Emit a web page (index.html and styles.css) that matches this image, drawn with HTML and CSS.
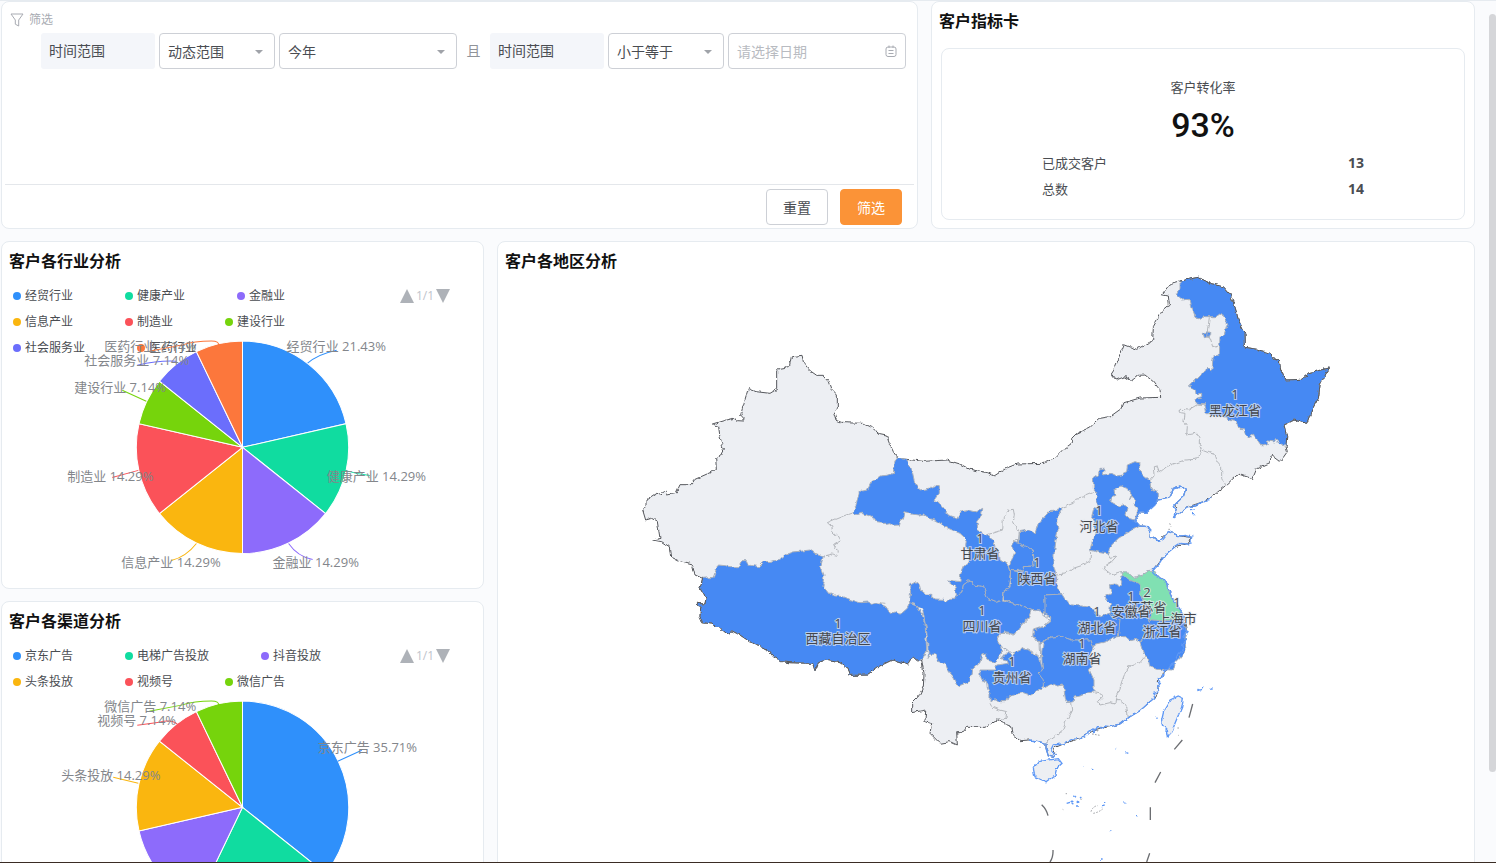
FILE: index.html
```html
<!DOCTYPE html>
<html lang="zh-CN">
<head>
    <meta charset="UTF-8">
    <meta name="viewport" content="width=device-width, initial-scale=1.0">
    <title>客户分析</title>
    <link rel="stylesheet" href="styles.css">
</head>
<body>
    <main class="dashboard">
        <div class="row row-top">
            <form class="panel filter">
                <div class="filter-head">
                    <svg class="icon" viewBox="0 0 14 14" width="14" height="14"><path d="M1 1h12L8.700 7v6l-3.400-1.800V7z"/></svg>
                    筛选
                </div>
                <div class="filter-row">
                    <label class="field" for="range">时间范围</label>
                    <span class="select short">
                        <select id="range"><option>动态范围</option></select>
                    </span>
                    <span class="select long">
                        <select aria-label="动态范围"><option>今年</option></select>
                    </span>
                    <span class="and">且</span>
                    <label class="field" for="compare">时间范围</label>
                    <span class="select short">
                        <select id="compare"><option>小于等于</option></select>
                    </span>
                    <span class="date long">
                        <input type="text" aria-label="日期" placeholder="请选择日期">
                        <svg class="icon" viewBox="0 0 12 12" width="12" height="12"><rect x="1" y="2" width="10" height="9.500" rx="2"/><path d="M4 .5v2.500M8 .5v2.500M3.500 5.500h5M3.500 8.500h5"/></svg>
                    </span>
                </div>
                <div class="filter-foot">
                    <button type="reset" class="btn">重置</button>
                    <button type="button" class="btn primary">筛选</button>
                </div>
            </form>

            <section class="panel metric">
                <h2 class="title">客户指标卡</h2>
                <div class="card">
                    <div class="card-name">客户转化率</div>
                    <div class="card-value">93%</div>
                    <div class="card-line"><span>已成交客户</span><b>13</b></div>
                    <div class="card-line"><span>总数</span><b>14</b></div>
                </div>
            </section>
        </div>

        <div class="row row-main">
            <div class="column">
                <section class="panel">
                    <h2 class="title">客户各行业分析</h2>
                    <div class="chart">
                        <div class="chart-head">
                            <ul class="legend">
                                <li class="c-blue">经贸行业</li>
                                <li class="c-green">健康产业</li>
                                <li class="c-purple">金融业</li>
                                <li class="c-yellow">信息产业</li>
                                <li class="c-red">制造业</li>
                                <li class="c-lime">建设行业</li>
                                <li class="c-indigo">社会服务业</li>
                                <li class="c-orange">医药行业</li>
                            </ul>
                            <div class="pager"><i class="up"></i>1/1<i class="down"></i></div>
                        </div>
                        <svg class="pie" viewBox="3 283 480 304">
                            <g class="slices" transform="translate(243 447)">
                                <path class="c-blue" d="M0 0V-106A106 106 0 0 1 103.300-23.600z"/>
                                <path class="c-green" d="M0 0L103.300-23.600A106 106 0 0 1 82.900 66.100z"/>
                                <path class="c-purple" d="M0 0L82.900 66.100A106 106 0 0 1 0 106z"/>
                                <path class="c-yellow" d="M0 0V106A106 106 0 0 1-82.900 66.100z"/>
                                <path class="c-red" d="M0 0L-82.900 66.100A106 106 0 0 1-103.300-23.600z"/>
                                <path class="c-lime" d="M0 0L-103.300-23.600A106 106 0 0 1-82.900-66.100z"/>
                                <path class="c-indigo" d="M0 0L-82.900-66.100A106 106 0 0 1-46-95.500z"/>
                                <path class="c-orange" d="M0 0L-46-95.500A106 106 0 0 1 0-106z"/>
                            </g>
                            <g class="leaders">
                                <path class="c-blue" d="M308 363Q318 354 337 350"/>
                                <path class="c-green" d="M345 470Q358 474 370 475"/>
                                <path class="c-purple" d="M289 543Q298 556 313 559"/>
                                <path class="c-yellow" d="M197 543Q187 556 172 560"/>
                                <path class="c-red" d="M139 470L113 477"/>
                                <path class="c-lime" d="M147 401L123 390"/>
                                <path class="c-indigo" d="M177 361Q160 360 138 365"/>
                                <path class="c-orange" d="M219 345Q220 341 212 341Q195 341 182 345L150 351"/>
                            </g>
                            <g class="labels">
                                <text x="287" y="351">经贸行业 21.43%</text>
                                <text x="327" y="481">健康产业 14.29%</text>
                                <text x="273" y="566">金融业 14.29%</text>
                                <text x="122" y="566">信息产业 14.29%</text>
                                <text x="68" y="481">制造业 14.29%</text>
                                <text x="75" y="392">建设行业 7.14%</text>
                                <text x="85" y="365">社会服务业 7.14%</text>
                                <text x="105" y="351">医药行业 7.14%</text>
                            </g>
                        </svg>
                    </div>
                </section>

                <section class="panel">
                    <h2 class="title">客户各渠道分析</h2>
                    <div class="chart">
                        <div class="chart-head">
                            <ul class="legend">
                                <li class="c-blue">京东广告</li>
                                <li class="c-green">电梯广告投放</li>
                                <li class="c-purple">抖音投放</li>
                                <li class="c-yellow">头条投放</li>
                                <li class="c-red">视频号</li>
                                <li class="c-lime">微信广告</li>
                            </ul>
                            <div class="pager"><i class="up"></i>1/1<i class="down"></i></div>
                        </div>
                        <svg class="pie" viewBox="3 643 480 304">
                            <g class="slices" transform="translate(243 807)">
                                <path class="c-blue" d="M0 0V-106A106 106 0 0 1 82.900 66.100z"/>
                                <path class="c-green" d="M0 0L82.900 66.100A106 106 0 0 1-46 95.500z"/>
                                <path class="c-purple" d="M0 0L-46 95.500A106 106 0 0 1-103.300 23.600z"/>
                                <path class="c-yellow" d="M0 0L-103.300 23.600A106 106 0 0 1-82.900-66.100z"/>
                                <path class="c-red" d="M0 0L-82.900-66.100A106 106 0 0 1-46-95.500z"/>
                                <path class="c-lime" d="M0 0L-46-95.500A106 106 0 0 1 0-106z"/>
                            </g>
                            <g class="leaders">
                                <path class="c-blue" d="M338 761L362 750"/>
                                <path class="c-yellow" d="M139 783L114 777"/>
                                <path class="c-red" d="M178 724Q172 719 160 722L138 725"/>
                                <path class="c-lime" d="M219 705Q220 701 212 701Q195 701 182 705L150 711"/>
                            </g>
                            <g class="labels">
                                <text x="318" y="752">京东广告 35.71%</text>
                                <text x="62" y="780">头条投放 14.29%</text>
                                <text x="98" y="725">视频号 7.14%</text>
                                <text x="105" y="711">微信广告 7.14%</text>
                            </g>
                        </svg>
                    </div>
                </section>
            </div>

            <section class="panel region">
                <h2 class="title">客户各地区分析</h2>
                <svg class="map" viewBox="-396 39 2928 1800">
                    <defs>
                        <filter id="crinkle" x="-5%" y="-5%" width="110%" height="110%" color-interpolation-filters="sRGB">
                            <feTurbulence type="fractalNoise" baseFrequency="0.06" numOctaves="2" seed="4"/>
                            <feDisplacementMap in="SourceGraphic" scale="13" xChannelSelector="R" yChannelSelector="G"/>
                        </filter>
                    </defs>
                    <g filter="url(#crinkle)">
                    <!-- country -->
                    <path class="land" d="M47 750L38 720 48 708 48 690 60 682 78 670 92 672 108 662 112 675 138 670 150 644 182 644 195 628 240 608 262 596 260 562 272 555 280 540 270 500 266 472 250 462 290 450 312 445 322 452 340 453 342 446 332 435 340 405 355 355 378 365 420 370 440 358 440 305 450 295 478 290 484 260 500 258 516 256 522 280 540 302 560 316 580 316 598 335 606 358 622 375 622 415 612 430 618 450 640 458 700 460 725 472 750 494 770 498 778 520 790 545 803 565 830 568 880 574 950 570 990 582 1020 598 1070 608 1092 618 1130 594 1160 582 1240 580 1270 568 1295 542 1325 520 1325 505 1340 490 1380 472 1410 445 1440 440 1475 415 1482 398 1530 384 1592 382 1590 360 1570 335 1545 315 1525 316 1505 332 1485 320 1458 330 1444 312 1452 300 1483 224 1520 238 1568 212 1570 170 1595 125 1618 105 1615 78 1595 74 1620 42 1650 33 1705 22 1740 40 1780 50 1798 70 1812 100 1825 150 1845 190 1846 232 1880 238 1920 250 1930 265 1948 272 1952 300 1965 330 2015 328 2040 308 2098 294 2080 325 2070 345 2065 385 2045 420 2030 460 1992 450 1962 465 1970 500 1968 530 1972 545 1960 562 1948 574 1924 556 1920 578 1880 596 1868 626 1825 612 1785 648 1740 685 1720 695 1670 712 1630 742 1640 718 1638 700 1660 680 1666 660 1650 648 1630 655 1615 685 1585 690 1575 705 1548 730 1530 728 1515 752 1530 768 1555 770 1562 780 1560 802 1585 812 1615 785 1650 798 1685 802 1670 822 1635 830 1605 855 1575 895 1565 905 1575 915 1600 925 1615 955 1630 990 1655 1025 1665 1060 1670 1085 1665 1110 1660 1130 1655 1150 1635 1180 1610 1200 1595 1215 1582 1230 1585 1265 1575 1282 1555 1300 1530 1322 1500 1340 1470 1362 1440 1370 1415 1375 1385 1385 1350 1405 1300 1422 1270 1435 1278 1450 1270 1462 1255 1458 1248 1435 1248 1420 1230 1416 1200 1410 1170 1412 1150 1395 1145 1370 1120 1360 1100 1350 1080 1362 1065 1372 1010 1372 1000 1385 980 1385 982 1425 960 1415 930 1420 900 1390 905 1360 885 1355 887 1320 845 1328 845 1300 865 1280 880 1250 882 1210 875 1170 862 1172 848 1160 835 1182 790 1168 745 1190 710 1215 660 1216 655 1195 630 1178 585 1170 565 1178 555 1202 548 1180 480 1178 455 1175 430 1160 418 1145 390 1130 375 1125 330 1095 305 1082 295 1095 280 1082 245 1062 218 1058 210 1040 212 1015 202 1000 225 1002 228 985 210 955 218 925 195 915 188 885 150 875 122 860 118 830 95 815 68 810 90 805 82 755 65 745z"/>

                    <!-- provinces with customers -->
                    <g class="active" transform="translate(0 210)">
                        <path d="M218 715L250 712 258 690 265 675 285 677 300 680 325 680 335 662 350 662 355 675 385 680 400 665 425 664 450 658 465 645 490 636 540 630 555 640 580 648 572 680 582 705 578 735 600 762 615 768 640 770 665 780 690 788 715 786 728 793 740 788 768 800 780 820 800 815 815 820 832 805 840 788 860 795 875 825 885 850 890 930 875 955 862 962 848 950 835 972 790 958 745 980 710 1005 660 1006 655 985 630 968 585 960 565 968 555 992 548 970 480 968 455 965 430 950 418 935 390 920 375 915 330 885 305 872 295 885 280 872 245 852 218 848 210 830 212 805 202 790 225 792 228 775 210 745z"/>
                    </g>
                    <g class="active" transform="translate(750 510)">
                        <path d="M53 55L80 58 98 100 104 128 120 150 145 145 160 138 178 140 178 160 160 182 175 186 185 200 205 225 235 235 245 215 262 212 285 218 308 205 305 225 290 245 295 275 320 285 340 300 345 320 358 335 360 360 388 378 392 395 385 440 392 445 372 455 368 480 350 487 325 480 310 440 282 435 270 420 250 435 245 460 230 465 225 440 202 420 240 425 242 400 250 380 268 365 265 340 260 320 262 300 240 280 205 265 165 240 150 236 130 222 115 225 95 222 75 215 70 235 62 240 58 255 40 256 30 248 20 250 5 250 -10 248 -16 236 -25 232 -55 220 -68 224 -82 218 -70 190 -62 155 -38 150 -25 125 -10 116 0 108 20 106 40 100 42 62z"/>
                        <path d="M400 305L415 310 440 318 460 330 462 378 430 380 430 395 412 388 392 390 388 378 405 335 395 320z"/>
                        <path d="M418 275L445 270 465 280 475 250 492 232 510 212 528 210 545 203 545 215 530 240 534 270 528 300 522 345 522 380 530 410 530 435 545 462 495 465 495 490 510 495 490 522 470 512 455 508 420 495 400 490 372 478 372 455 390 445 392 388 430 395 430 380 462 378 460 330 415 310z"/>
                        <path d="M88 485L92 460 88 435 105 425 118 434 122 450 140 465 155 466 165 477 188 478 198 486 210 475 228 475 228 465 245 460 250 435 270 420 282 435 310 440 325 480 350 487 368 480 400 490 420 495 455 508 448 530 425 552 420 565 405 580 375 575 355 590 352 600 362 615 365 640 345 670 320 660 320 642 305 645 300 668 275 690 270 725 235 738 220 710 205 692 195 670 175 665 165 640 150 640 145 655 143 600 138 560 128 510 105 490z"/>
                        <path d="M495 465L545 462 560 485 575 495 620 500 635 502 645 518 665 530 690 518 720 530 722 560 715 590 700 592 680 605 650 612 640 620 632 600 610 600 575 600 540 588 510 592 490 605 480 610 472 595 458 590 460 570 490 560 512 545 508 528 495 522z"/>
                        <path d="M490 605L510 592 540 588 575 600 610 600 632 600 640 620 632 640 630 665 636 680 628 690 642 720 642 755 620 760 600 768 580 772 580 785 562 788 556 775 550 735 532 738 520 730 490 745 485 715 475 700 487 690 485 640z"/>
                        <path d="M375 640L388 638 395 650 405 638 430 625 455 635 480 658 487 690 475 700 490 720 490 740 450 765 430 758 410 762 385 772 378 785 360 785 345 776 330 785 330 760 322 745 320 725 300 715 300 690 345 690 350 675 372 672 385 670 380 660 362 655z"/>
                    </g>
                    <g class="active" transform="translate(1230 540)">
                        <path d="M160 85L175 75 180 58 192 58 190 75 215 70 230 78 245 75 260 68 262 45 285 35 300 40 298 60 308 75 330 92 332 115 355 130 355 150 345 165 318 190 300 188 285 212 300 228 260 250 235 265 215 285 205 312 180 308 150 300 160 262 170 245 160 235 168 215 155 200 160 180 175 165 165 150 175 140 160 120z"/>
                        <path d="M242 382L255 378 262 388 300 400 300 430 310 455 325 465 335 490 325 510 335 530 320 545 300 578 285 568 270 572 258 560 235 560 240 510 208 490 212 462 193 440 215 430 208 405 225 402 240 410 248 395z"/>
                        <path d="M325 508L360 512 400 512 425 488 430 515 440 545 435 570 438 600 420 625 405 640 400 660 350 658 330 650 325 625 310 610 300 578 320 545 335 530z"/>
                        <path class="top" d="M245 365L262 366 280 382 310 375 320 362 340 360 350 375 372 388 385 420 400 450 415 475 425 485 420 510 360 512 325 508 335 490 325 465 310 455 300 430 300 400 262 390 248 378z"/>
                    </g>
                    <g class="active" transform="translate(1380 0)">
                        <path d="M270 33L325 22 360 40 400 50 418 70 432 100 445 150 465 190 466 232 500 238 540 250 550 265 568 272 572 300 585 330 635 328 660 308 718 294 700 325 690 345 685 385 665 420 650 460 612 450 582 465 590 500 588 530 570 520 558 508 552 516 532 512 532 524 515 528 495 500 490 488 480 505 465 490 462 480 450 478 440 455 415 450 400 438 375 440 350 430 345 402 315 398 320 385 335 380 335 370 318 372 316 360 298 348 330 315 350 302 352 292 365 305 370 258 388 255 390 200 402 195 413 160 395 128 378 140 345 140 325 146 315 142 305 110 300 88 278 90 258 72 270 55z"/>
                        <path d="M340 190L352 185 360 188 355 200 343 203z"/>
                    </g>

                    <!-- municipalities inside Hebei and Chongqing -->
                    <g class="blank">
                        <path d="M1442 695L1445 680 1455 676 1452 660 1475 650 1495 658 1505 672 1498 690 1506 678 1515 690 1512 705 1524 718 1515 750 1495 745 1485 735 1492 710 1480 704 1465 708z"/>
                        <path d="M1205 1018L1230 1020 1240 1035 1262 1050 1240 1070 1210 1080 1208 1100 1230 1115 1232 1165 1215 1152 1205 1140 1180 1135 1155 1148 1135 1145 1115 1130 1102 1110 1115 1090 1155 1092 1170 1070 1195 1045z"/>
                    </g>

                    <!-- province borders -->
                    <g class="inner">
                        <path d="M668 728L640 738 615 748 592 758 605 770 608 785 622 798 630 812 612 822 616 836 625 842 622 856 605 852 580 858"/>
                        <path d="M1070 795L1100 785 1118 780 1120 745 1135 720 1150 718 1153 735 1150 755 1168 785M1168 785L1168 810 1150 815"/>
                        <path d="M1295 713L1330 700 1340 685 1360 680 1380 672 1395 665 1405 672"/>
                        <path d="M1280 915L1305 912 1330 895 1360 885 1380 875 1382 845"/>
                        <path d="M1435 852L1440 862 1460 858 1445 875 1425 888 1422 898 1442 915 1475 905"/>
                        <path d="M1080 1300L1085 1310 1110 1320 1130 1325 1128 1345 1100 1350"/>
                        <path d="M1322 1298L1325 1320 1310 1350 1298 1380 1275 1400 1248 1420"/>
                        <path d="M1392 1265L1408 1268 1418 1280 1402 1295 1410 1305 1440 1298 1455 1302 1458 1280 1470 1255 1475 1235 1485 1210 1500 1185 1530 1178 1540 1165 1550 1162"/>
                        <path d="M1455 1292L1470 1292 1490 1308 1495 1342"/>
                        <path d="M1725 402L1700 405 1675 420 1650 418 1652 428 1665 430 1662 455 1672 470 1670 495 1700 490 1708 505 1708 520 1715 540 1740 550 1755 552 1762 575 1775 590 1775 625 1785 648"/>
                        <path d="M1715 540L1710 555 1695 568 1665 570 1630 582 1610 590 1588 608 1580 588 1570 590 1572 618 1560 632"/>
                        <path d="M1738 142L1735 165 1730 200 1740 205 1748 230 1765 225"/>
                        <path d="M750 998L766 1000"/>
                    </g>

                    <!-- national border over the province fills -->
                    <path class="frontier" d="M1650 33L1705 22 1740 40 1780 50 1798 70 1812 100 1825 150 1845 190 1846 232 1880 238 1920 250 1930 265 1948 272 1952 300 1965 330 2015 328 2040 308 2098 294 2080 325 2070 345 2065 385 2045 420 2030 460 1992 450 1962 465 1970 500 1968 530M218 925L210 955 228 985 225 1002 202 1000 212 1015 210 1040 218 1058 245 1062 280 1082 295 1095 305 1082 330 1095 375 1125 390 1130 418 1145 430 1160 455 1175 480 1178 548 1180 555 1202 565 1178 585 1170 630 1178 655 1195 660 1216 710 1215 745 1190 790 1168 835 1182 848 1160 862 1172 875 1170"/>

                    <!-- coast and islands -->
                    <g class="coast">
                        <path d="M1740 685L1735 692 1720 695 1695 706 1670 712 1630 742 1640 718 1630 710 1638 700 1660 680 1666 660 1650 648 1630 655 1615 685 1585 690 1575 705 1548 730 1530 728 1515 752 1530 768 1555 770 1562 780 1560 802 1585 812 1600 805 1615 785 1650 798 1665 796 1685 802 1682 818 1670 822 1650 820 1635 830 1605 855 1590 880 1575 895 1565 905 1575 915 1600 925 1615 955 1630 990 1655 1025 1665 1060 1658 1075 1674 1085 1662 1100 1668 1115 1655 1125 1660 1140 1648 1150 1635 1180 1620 1186 1610 1200 1600 1202 1602 1215 1582 1225 1592 1240 1580 1255 1588 1265 1570 1270 1575 1282 1555 1300 1530 1322 1500 1340 1470 1362 1440 1370 1425 1368 1415 1378 1400 1372 1392 1385 1385 1375 1375 1392 1350 1405 1325 1408 1300 1422 1270 1425 1262 1440 1278 1450 1270 1462 1255 1458 1248 1435 1248 1420 1230 1416 1200 1410"/>
                        <path class="isle" d="M1225 1475L1245 1472 1285 1466 1296 1480 1280 1495 1275 1515 1248 1535 1215 1520 1210 1495z"/>
                        <path class="isle" d="M1645 1278L1660 1285 1655 1312 1635 1360 1624 1390 1615 1400 1612 1382 1597 1365 1595 1350 1602 1320 1620 1290z"/>
                        <path class="dots" d="M1680 722l12-2M1686 731l8 0M1702 1262l12-4M1714 1253l6 0M1742 1254l6 0M1577 1340l6 2M1458 1432l4 2M1486 1445l6 2M1359 1487l3 0M1386 1498l4 0M1330 1574l8 8M1310 1600l10-3M1322 1592l8 8M1340 1598l8-2M1350 1585l4-4M1341 1608l6 0M1413 1610l8-2M1422 1600l4 0M1483 1599l3 0M1516 1640l6 0M1438 1682l3 0M1413 1767l5 0"/>
                    </g>
                    </g>
                    <g class="outer">
                        <path d="M1688 1302L1677 1343M1657 1410L1633 1438M1592 1506L1575 1538M1561 1612V1650M1559 1750L1550 1776M1235 1604Q1250 1618 1254 1637M1269 1740Q1270 1762 1260 1776"/>
                        <path class="faint" d="M1307 1571l4 0M1298 1618l2 1M1383 1625q5-16 20-18M1390 1630q16-3 28-13M1352 1590l4-5M1619 760l4 10M1615 778l6 0M1644 1396l2 0M1642 1374l6 0M1228 1432l4 0M1386 1392l24 4"/>
                    </g>

                    <g class="names">
                        <text x="1815" y="372">1</text><text x="1815" y="420">黑龙江省</text>
                        <text x="624" y="1059">1</text><text x="624" y="1104">西藏自治区</text>
                        <text x="1050" y="804">1</text><text x="1050" y="849">甘肃省</text>
                        <text x="1221" y="876">1</text><text x="1221" y="924">陕西省</text>
                        <text x="1407" y="720">1</text><text x="1407" y="768">河北省</text>
                        <text x="1056" y="1020">1</text><text x="1056" y="1068">四川省</text>
                        <text x="1401" y="1023">1</text><text x="1401" y="1071">湖北省</text>
                        <text x="1356" y="1119">1</text><text x="1356" y="1164">湖南省</text>
                        <text x="1146" y="1173">1</text><text x="1146" y="1221">贵州省</text>
                        <text x="1551" y="966">2</text><text x="1551" y="1011">江苏省</text>
                        <text x="1503" y="978">1</text><text x="1503" y="1023">安徽省</text>
                        <text x="1641" y="996">1</text><text x="1641" y="1044">上海市</text>
                        <text x="1596" y="1083">浙江省</text>
                    </g>
                </svg>
            </section>
        </div>
        <div class="scroll-thumb"></div>
    </main>
</body>
</html>
```
FILE: styles.css
```css
:root {
    --bg: #fafbfd;
    --border: #e6ebf0;
    --text: #4a4d52;
    --muted: #a8abb2;
    --font: "Open Sans", "Noto Sans CJK SC", sans-serif;
}

* {
    box-sizing: border-box;
}

body {
    margin: 0;
    background: var(--bg);
    color: var(--text);
    font-family: var(--font);
    font-size: 14px;
}

.dashboard {
    position: relative;
    height: 100vh;
    overflow: hidden;
    padding: 0 21px 0 1px;
    border-top: 1px solid var(--border);
    border-bottom: 1px solid #3a2c24;
}

.row {
    display: grid;
    gap: 13px;
    margin-bottom: 12px;
}

.row-top {
    grid-template-columns: 917fr 544fr;
}

.row-main {
    grid-template-columns: 483fr 978fr;
}

.column {
    display: flex;
    flex-direction: column;
    gap: 12px;
}

.panel {
    background: #fff;
    border: 1px solid var(--border);
    border-radius: 8px;
    min-width: 0;
}

.title {
    margin: 0;
    padding: 7px 7px 10px;
    font-size: 16px;
    line-height: 24px;
    font-weight: 600;
    color: #111;
}

/* filter */
.icon {
    fill: none;
    stroke: var(--muted);
}

.filter {
    display: flex;
    flex-direction: column;
    padding: 6px 3px 3px;
}

.filter-head {
    display: flex;
    align-items: center;
    gap: 5px;
    padding-left: 5px;
    font-size: 12px;
    line-height: 24px;
    color: var(--muted);
}

.filter-row {
    display: flex;
    gap: 4px;
    min-height: 152px;
    padding: 1px 8px 0 36px;
    line-height: 36px;
}

.field {
    flex: 114;
    height: 36px;
    text-indent: 8px;
    border-radius: 3px;
    background: #f4f6fa;
}

.and {
    flex: 25;
    text-align: center;
    color: #909399;
}

.short {
    flex: 116;
}

.long {
    flex: 178;
}

.select,
.date {
    position: relative;
    height: 36px;
    min-width: 0;
}

.select select,
.date input {
    display: block;
    width: 100%;
    height: 36px;
    padding: 0 8px;
    border: 1px solid #cdd0d6;
    border-radius: 4px;
    background: #fff;
    color: var(--text);
    font: 14px var(--font);
    appearance: none;
}

.date input::placeholder {
    color: #b8bbc1;
}

.select::after {
    content: "";
    position: absolute;
    right: 12px;
    top: 17px;
    border: 4px solid transparent;
    border-top-color: #a0a3a9;
    border-bottom: 0;
}

.date .icon {
    position: absolute;
    right: 9px;
    top: 12px;
}

.filter-foot {
    display: flex;
    justify-content: flex-end;
    gap: 12px;
    padding: 4px 12px 0 0;
    border-top: 1px solid #e4e7eb;
}

.btn {
    width: 62px;
    height: 36px;
    border: 1px solid #cdd0d6;
    border-radius: 4px;
    background: #fff;
    color: var(--text);
    font: 14px var(--font);
    cursor: pointer;
}

.primary {
    border-color: #fb9337;
    background: #fb9337;
    color: #fff;
}

/* metric card */
.card {
    height: 172px;
    margin: 5px 9px 8px;
    padding: 25px 100px 0;
    border: 1px solid var(--border);
    border-radius: 8px;
    font-size: 13px;
    line-height: 26px;
}

.card-name {
    text-align: center;
}

.card-value {
    text-align: center;
    font-family: Roboto, sans-serif;
    font-size: 34px;
    line-height: 50px;
    font-weight: 500;
    color: #111;
}

.card-line {
    display: flex;
    justify-content: space-between;
}

.card-line b {
    font-size: 14px;
}

/* series colours */
.c-blue { --c: #2f90fb; }
.c-green { --c: #10dca0; }
.c-purple { --c: #8d6bfb; }
.c-yellow { --c: #fab60f; }
.c-red { --c: #fb5259; }
.c-lime { --c: #76d40c; }
.c-indigo { --c: #6b6efc; }
.c-orange { --c: #fc773c; }

/* legend and pie share one cell, the pie labels run over the legend */
.chart {
    display: grid;
}

.chart-head,
.pie {
    grid-area: 1 / 1;
}

.chart-head {
    display: flex;
    justify-content: space-between;
    align-items: flex-start;
    padding: 0 33px 0 11px;
    font-size: 12px;
    line-height: 26px;
}

.legend {
    display: flex;
    flex-wrap: wrap;
    column-gap: 52px;
    flex: 0 1 370px;
    margin: 0;
    padding: 0;
    list-style: none;
}

.legend li {
    display: flex;
    align-items: center;
    gap: 4px;
}

.legend li::before {
    content: "";
    width: 8px;
    height: 8px;
    border-radius: 50%;
    background: var(--c);
}

.pager {
    display: flex;
    align-items: center;
    gap: 2px;
    color: #c0c4cc;
}

.up,
.down {
    border: 7px solid transparent;
}

.up {
    border-top: 0;
    border-bottom: 14px solid #aeb2b8;
}

.down {
    border-bottom: 0;
    border-top: 14px solid #aeb2b8;
}

.pie {
    display: block;
    width: 100%;
}

.slices path {
    fill: var(--c);
    stroke: #fff;
}

.leaders path {
    fill: none;
    stroke: var(--c);
}

.labels text {
    font-size: 13px;
    fill: #83868b;
}

/* map */
.map {
    display: block;
    width: 100%;
    overflow: visible;
}

.land {
    fill: #edeff3;
    stroke: #55575c;
    stroke-width: 3;
    stroke-linejoin: round;
}

.active path {
    fill: #4689f3;
    stroke: #a9b1bd;
    stroke-width: 3;
}

.active .top {
    fill: #80e0b2;
}

.blank path {
    fill: #edeff3;
    stroke: #a9b1bd;
    stroke-width: 3;
}

.inner path {
    fill: none;
    stroke: #b4b7bc;
    stroke-width: 3;
}

.frontier {
    fill: none;
    stroke: #55575c;
    stroke-width: 3;
}

.coast path {
    fill: none;
    stroke: #5e98f6;
    stroke-width: 4;
}

.coast .isle {
    fill: #edeff3;
}

.outer path {
    fill: none;
    stroke: #6c6e72;
    stroke-width: 4;
}

.outer .faint {
    stroke: #a4a6aa;
    stroke-width: 3;
    stroke-dasharray: 5 4;
}

.names text {
    font-size: 39px;
    fill: #43464c;
    stroke: #e8ebf0;
    stroke-opacity: .7;
    stroke-width: 6;
    paint-order: stroke;
    text-anchor: middle;
    dominant-baseline: central;
}

.scroll-thumb {
    position: absolute;
    right: 0;
    top: 13px;
    width: 7px;
    height: 88%;
    border-radius: 4px;
    background: #d5d6d9;
}
```
